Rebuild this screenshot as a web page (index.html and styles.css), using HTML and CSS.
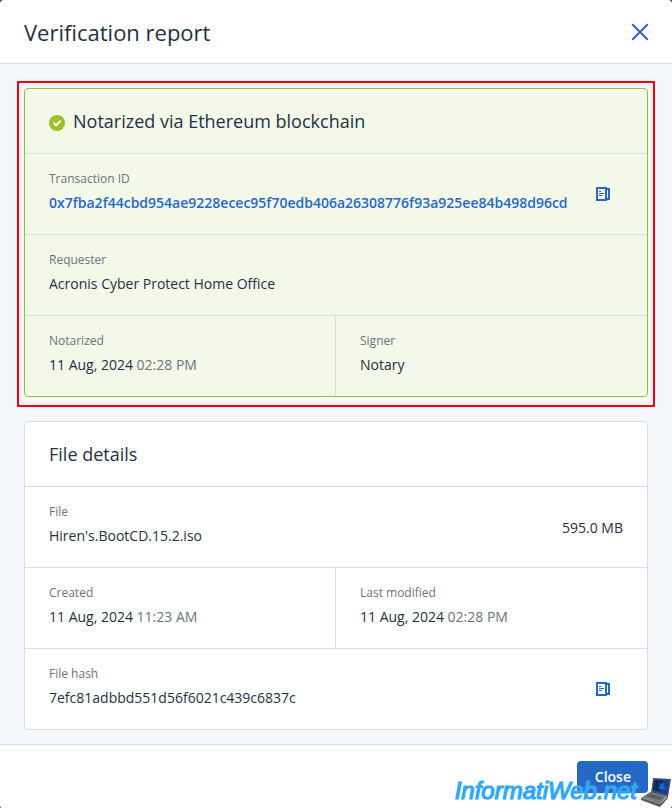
FILE: index.html
```
<!DOCTYPE html>
<html lang="en">
<head>
    <meta charset="UTF-8">
    <meta name="viewport" content="width=device-width, initial-scale=1.0">
    <title>Verification report</title>
    <link rel="stylesheet" href="styles.css">
</head>
<body>
    <div class="dialog">
        <header class="dialog-header">
            <h1>Verification report</h1>
            <button class="icon-button" type="button" aria-label="Close report">
                <svg width="18" height="18" viewBox="0 0 18 18" fill="none" stroke="currentColor" stroke-width="2">
                    <path d="M1.2 1.2l15.600 15.600M16.800 1.200L1.200 16.800"/>
                </svg>
            </button>
        </header>

        <main class="dialog-body">
            <section class="card card-notarized">
                <h2 class="card-title">
                    <svg class="check" width="16" height="16" viewBox="0 0 16 16">
                        <circle cx="8" cy="8" r="8" fill="#9bc225"/>
                        <path d="M4.500 7.800l2.600 2.500 4.600-4.700" fill="none" stroke="#fff" stroke-width="2"/>
                    </svg>
                    Notarized via Ethereum blockchain
                </h2>
                <div class="row">
                    <div class="field">
                        <div class="label">Transaction ID</div>
                        <a class="value hash-link" href="#">0x7fba2f44cbd954ae9228ecec95f70edb406a26308776f93a925ee84b498d96cd</a>
                    </div>
                    <button class="icon-button copy" type="button" aria-label="Copy transaction ID">
                        <svg width="14" height="14" viewBox="0 0 14 14" fill="none" stroke="currentColor" stroke-width="2">
                            <path d="M1 1h9v12H1z"/>
                            <path d="M10 2h3v10h-3"/>
                            <path d="M3 4.500h2M3 6.500h5M3 8.500h3" stroke-width="1"/>
                        </svg>
                    </button>
                </div>
                <div class="row">
                    <div class="field">
                        <div class="label">Requester</div>
                        <div class="value">Acronis Cyber Protect Home Office</div>
                    </div>
                </div>
                <div class="row row-split">
                    <div class="field">
                        <div class="label">Notarized</div>
                        <div class="value">11 Aug, 2024 <span class="time">02:28 PM</span></div>
                    </div>
                    <div class="field">
                        <div class="label">Signer</div>
                        <div class="value">Notary</div>
                    </div>
                </div>
            </section>

            <section class="card">
                <h2 class="card-title">File details</h2>
                <div class="row">
                    <div class="field">
                        <div class="label">File</div>
                        <div class="value">Hiren's.BootCD.15.2.iso</div>
                    </div>
                    <div class="value size">595.0 MB</div>
                </div>
                <div class="row row-split">
                    <div class="field">
                        <div class="label">Created</div>
                        <div class="value">11 Aug, 2024 <span class="time">11:23 AM</span></div>
                    </div>
                    <div class="field">
                        <div class="label">Last modified</div>
                        <div class="value">11 Aug, 2024 <span class="time">02:28 PM</span></div>
                    </div>
                </div>
                <div class="row">
                    <div class="field">
                        <div class="label">File hash</div>
                        <div class="value">7efc81adbbd551d56f6021c439c6837c</div>
                    </div>
                    <button class="icon-button copy" type="button" aria-label="Copy file hash">
                        <svg width="14" height="14" viewBox="0 0 14 14" fill="none" stroke="currentColor" stroke-width="2">
                            <path d="M1 1h9v12H1z"/>
                            <path d="M10 2h3v10h-3"/>
                            <path d="M3 4.500h2M3 6.500h5M3 8.500h3" stroke-width="1"/>
                        </svg>
                    </button>
                </div>
            </section>
        </main>

        <footer class="dialog-footer">
            <button class="close-button" type="button">Close</button>
        </footer>

        <div class="watermark">
            <span>InformatiWeb.net</span>
            <svg width="32" height="32" viewBox="0 0 32 32">
                <path d="M13 1l18 1-3 18-17-4z" fill="#4a505b"/>
                <path d="M14.500 2.500l15 1-2.500 14-14-3.500z" fill="#0b3fa0"/>
                <path d="M15 3l8 .5-3 11-7-1.500z" fill="#10265e"/>
                <path d="M19 6l3 1 2-1 0 3 2 3-4 1-4-2 2-2z" fill="#1d66c4"/>
                <path d="M10 15l17 4-7 8-19-6z" fill="#777b81"/>
                <path d="M10 17l13 3-3 3-14-4z" fill="#5a5d63"/>
                <path d="M8 22l5 1.500-2 1.500-5-2z" fill="#92969b"/>
                <path d="M1 21l19 6 8-8v2l-8 9-19-7z" fill="#55585e"/>
            </svg>
        </div>
    </div>
</body>
</html>
```
FILE: styles.css
```
* {
    box-sizing: border-box;
}
body {
    margin: 0;
    background: #3c4043;
    color: #243143;
    font-family: "Open Sans", "Noto Sans", sans-serif;
    font-size: 14px;
}
h1, h2 {
    margin: 0;
    font-weight: 400;
}
.dialog {
    position: relative;
    display: flex;
    flex-direction: column;
    min-height: 100vh;
    background: white;
    border-radius: 4px;
    overflow: hidden;
}
.dialog-header {
    display: flex;
    align-items: center;
    justify-content: space-between;
    height: 64px;
    padding: 0 23px 0 24px;
    border-bottom: 1px solid #d6deeb;
}
.dialog-header h1 {
    font-size: 22px;
    line-height: 32px;
}
.icon-button {
    display: flex;
    padding: 0;
    border: none;
    background: none;
    color: #2668c5;
    cursor: pointer;
}
.dialog-body {
    display: flex;
    flex-direction: column;
    gap: 24px;
    padding: 24px 24px 14px;
    background: #f3f6fb;
}
.card {
    position: relative;
    background: white;
    border: 1px solid #d6dfec;
    border-radius: 4px;
}
.card-notarized {
    background: #f3f8e9;
    border-color: #9bc225;
}
/* red frame around the notarization block */
.card-notarized::after {
    content: "";
    position: absolute;
    inset: -8px -8px -11px;
    border: 2px solid #fa0008;
    pointer-events: none;
}
.card-title {
    display: flex;
    align-items: center;
    gap: 8px;
    height: 64px;
    padding: 0 24px;
    font-size: 18px;
    line-height: 24px;
}
.check {
    margin-top: 4px;
}
.row {
    display: flex;
    align-items: center;
    justify-content: space-between;
    height: 81px;
    border-top: 1px solid #d6dfe6;
}
.row-split {
    display: grid;
    grid-template-columns: 1fr 1fr;
}
.field {
    height: 80px;
    padding: 13px 24px;
}
.row-split .field:first-child {
    border-right: 1px solid #d6dfe6;
}
.label {
    color: #6b747f;
    font-size: 12px;
    line-height: 24px;
}
.value {
    display: block;
    line-height: 24px;
}
.time {
    color: #6c747e;
}
.hash-link {
    color: #2668c5;
    font-weight: 600;
    text-decoration: none;
}
.size {
    padding: 2px 24px 0 0;
}
.copy {
    margin-right: 37px;
}
.dialog-footer {
    display: flex;
    justify-content: flex-end;
    padding: 16px 24px;
    border-top: 1px solid #d6deeb;
}
.close-button {
    height: 32px;
    padding: 0 17px 2px 18px;
    border: none;
    border-radius: 4px;
    background: #2668c5;
    color: white;
    font-family: inherit;
    font-size: 14px;
    font-weight: 600;
    cursor: pointer;
}
.watermark {
    position: absolute;
    right: 0;
    bottom: 0;
    display: flex;
    align-items: flex-end;
    gap: 3px;
    color: #35a4f5;
    font: italic 24px/36px "Liberation Sans", Arial, sans-serif;
    -webkit-text-stroke: 1px #35a4f5;
    text-shadow: 0 0 2px #45e0ff;
    pointer-events: none;
}
```
